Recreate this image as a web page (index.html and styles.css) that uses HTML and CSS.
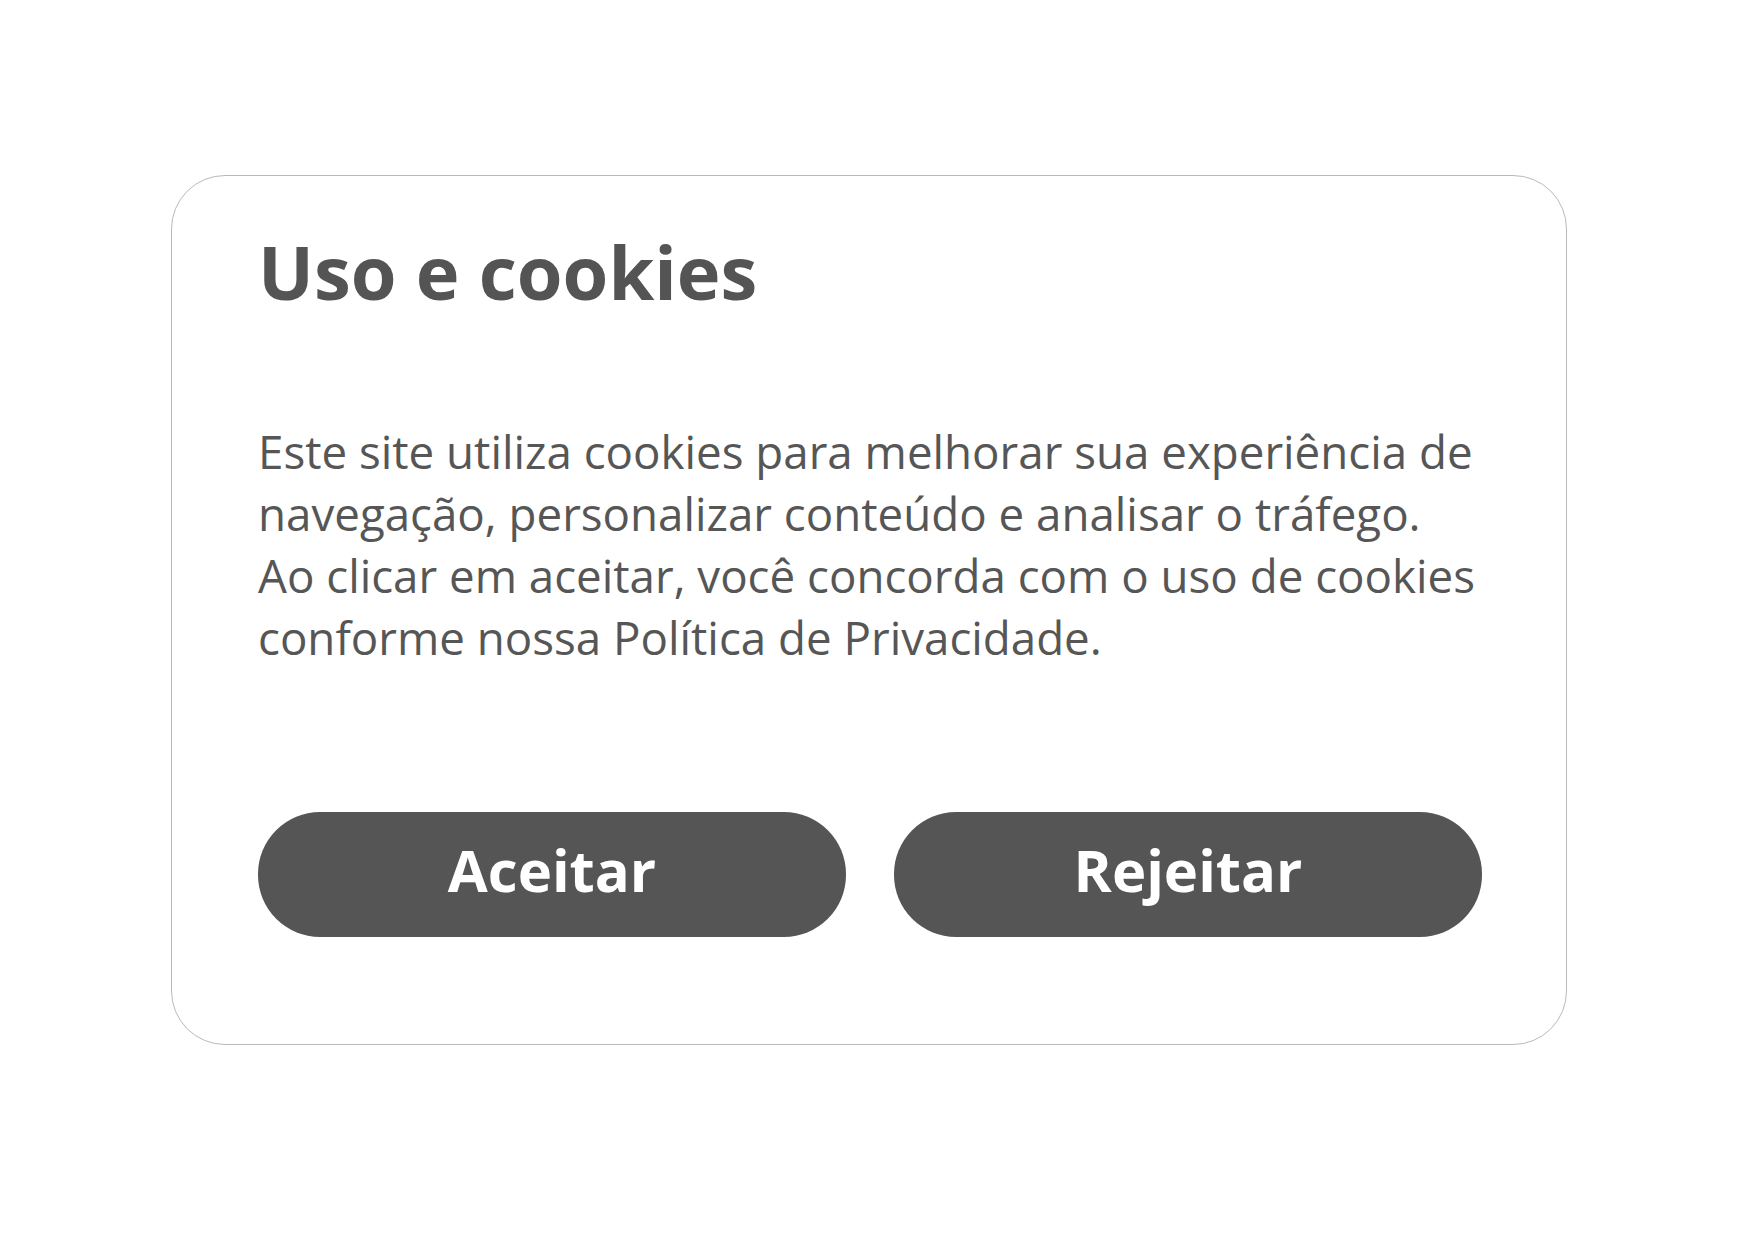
FILE: index.html
```html
<!DOCTYPE html>
<html lang="pt-BR">
<head>
<meta charset="utf-8">
<title>Uso e cookies</title>
<link rel="stylesheet" href="styles.css">
</head>
<body>
  <section class="cookie-card" role="dialog" aria-labelledby="cookie-title">
    <h1 id="cookie-title" class="cookie-title">Uso e cookies</h1>
    <p class="cookie-text">
      Este site utiliza cookies para melhorar sua experiência de<br>
      navegação, personalizar conteúdo e analisar o tráfego.<br>
      Ao clicar em aceitar, você concorda com o uso de cookies<br>
      conforme nossa Política de Privacidade.
    </p>
    <div class="cookie-actions">
      <button class="cookie-btn" type="button">Aceitar</button>
      <button class="cookie-btn" type="button">Rejeitar</button>
    </div>
  </section>
</body>
</html>
```

FILE: styles.css
```css
html, body {
  margin: 0;
  padding: 0;
  background: #ffffff;
}

body {
  font-family: "Open Sans", "Noto Sans", sans-serif;
  color: #545454;
  padding: 175px 0 0 171px;
}

.cookie-card {
  box-sizing: border-box;
  width: 1396px;
  height: 870px;
  border: 1px solid #b9b9b9;
  border-radius: 54px;
  padding: 52px 84px 0 86px;
  display: flex;
  flex-direction: column;
}

.cookie-title {
  margin: 0;
  font-size: 74px;
  font-weight: 700;
  line-height: 1.2;
  color: #545454;
}

.cookie-text {
  margin: 103px 0 0;
  font-size: 45.7px;
  font-weight: 400;
  line-height: 62px;
  color: #565656;
  white-space: nowrap;
}

.cookie-actions {
  margin-top: 144px;
  display: grid;
  grid-template-columns: 1fr 1fr;
  gap: 48px;
}

.cookie-btn {
  box-sizing: border-box;
  height: 125px;
  border: none;
  border-radius: 62px;
  background: #555555;
  color: #ffffff;
  font-family: "Open Sans", "Noto Sans", sans-serif;
  font-size: 58px;
  font-weight: 700;
  cursor: pointer;
  padding: 0 0 9px;
}
```
